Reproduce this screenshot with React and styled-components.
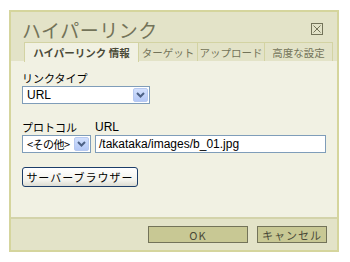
import React from "react";
import styled, { createGlobalStyle } from "styled-components";

const GlobalStyle = createGlobalStyle`
  html, body {
    margin: 0;
    padding: 0;
    background: #ffffff;
  }
  body {
    font-family: "Noto Sans CJK JP", "DejaVu Sans", sans-serif;
    font-size: 12px;
  }
`;

const Dialog = styled.div`
  box-sizing: border-box;
  margin: 10px 0 0 9px;
  width: 330px;
  height: 242px;
  border: 2px solid #d5d59d;
  background: #e3e3c8;
  display: flex;
  flex-direction: column;
`;

const TitleBar = styled.div`
  display: flex;
  align-items: center;
  justify-content: space-between;
  height: 30px;
  padding: 0 14px 0 11px;
`;

const Title = styled.div`
  font-size: 19px;
  color: #737359;
  letter-spacing: 0.5px;
  line-height: 1;
  padding-top: 4px;
`;

const CloseBox = styled.div`
  width: 12px;
  height: 12px;
  display: flex;
  margin-top: 4px;
`;

const Tabs = styled.div`
  display: flex;
  padding-left: 13px;
  height: 19px;
`;

const Tab = styled.div`
  box-sizing: border-box;
  width: ${(p) => p.$w}px;
  height: ${(p) => (p.$active ? "20px" : "19px")};
  border: 1px solid #d3d3a3;
  border-bottom: none;
  margin-right: -1px;
  background: ${(p) => (p.$active ? "#f1f1e3" : "#e3e3c8")};
  color: ${(p) => (p.$active ? "#4a4a38" : "#737359")};
  font-size: 10.5px;
  font-weight: ${(p) => (p.$active ? "bold" : "normal")};
  display: flex;
  align-items: center;
  justify-content: center;
  position: relative;
  z-index: ${(p) => (p.$active ? 1 : 0)};
  white-space: nowrap;
`;

const Panel = styled.div`
  box-sizing: border-box;
  height: 156px;
  background: #f1f1e3;
  padding: 11px 11px 0 11px;
  display: flex;
  flex-direction: column;
`;

const Label = styled.div`
  font-size: 11px;
  color: #000;
  line-height: 13px;
  height: 14px;
  white-space: nowrap;
  font-family: ${(p) => (p.$latin ? '"Liberation Sans", sans-serif' : "inherit")};
  font-size: ${(p) => (p.$latin ? "12px" : "11px")};
`;

const Field = styled.div`
  display: flex;
  flex-direction: column;
  flex: ${(p) => (p.$grow ? 1 : "none")};
  margin-bottom: ${(p) => p.$mb || 0}px;
`;

const Row = styled.div`
  display: flex;
  gap: 4px;
`;

const SelectBox = styled.div`
  box-sizing: border-box;
  width: ${(p) => p.$w}px;
  height: 18px;
  border: 1px solid #7f9db9;
  background: #fff;
  display: flex;
  align-items: center;
  justify-content: space-between;
  padding: 1px;
  font-size: 12px;
  color: #000;
`;

const SelectText = styled.span`
  padding-left: 3px;
  line-height: 1;
  white-space: nowrap;
  font-family: ${(p) => (p.$latin ? '"Liberation Sans", sans-serif' : "inherit")};
  font-size: ${(p) => (p.$latin ? "12px" : "11px")};
  letter-spacing: ${(p) => (p.$latin ? "0" : "-0.5px")};
`;

const ArrowBtn = styled.div`
  flex: none;
  width: 15px;
  height: 14px;
  border-radius: 2px;
  background: linear-gradient(#d2e0fd, #b4c8f6);
  border: 1px solid #b7c9f0;
  box-sizing: border-box;
  display: flex;
  align-items: center;
  justify-content: center;
`;

const TextInput = styled.div`
  box-sizing: border-box;
  height: 18px;
  border: 1px solid #7f9db9;
  background: #fff;
  display: flex;
  align-items: center;
  padding-left: 3px;
  font-family: "Liberation Sans", sans-serif;
  font-size: 12px;
  color: #000;
`;

const BrowseButton = styled.div`
  box-sizing: border-box;
  width: 116px;
  height: 20px;
  border: 1px solid #1c3d69;
  border-radius: 3px;
  background: linear-gradient(#ffffff, #f2f2ec 70%, #dcdcd2);
  display: flex;
  align-items: center;
  justify-content: center;
  font-size: 11px;
  letter-spacing: 1px;
  color: #000;
`;

const Footer = styled.div`
  flex: 1;
  border-top: 2px solid #d3d3aa;
  display: flex;
  align-items: center;
  justify-content: flex-end;
  gap: 9px;
  padding-right: 10px;
`;

const FootButton = styled.div`
  box-sizing: border-box;
  width: ${(p) => p.$w}px;
  height: 17px;
  border: 1px solid #737359;
  background: #c8c894;
  display: flex;
  align-items: center;
  justify-content: center;
  font-size: 11px;
  color: #4a4a38;
  letter-spacing: 1px;
`;

const Chevron = () => (
  <svg width="9" height="6" viewBox="0 0 9 6">
    <path d="M1 1 L4.5 4.5 L8 1" fill="none" stroke="#4d6185" strokeWidth="2" />
  </svg>
);

const Select = ({ w, latin, children }) => (
  <SelectBox $w={w}>
    <SelectText $latin={latin}>{children}</SelectText>
    <ArrowBtn>
      <Chevron />
    </ArrowBtn>
  </SelectBox>
);

export default function App() {
  return (
    <>
      <GlobalStyle />
      <Dialog>
        <TitleBar>
          <Title>ハイパーリンク</Title>
          <CloseBox>
            <svg width="12" height="12" viewBox="0 0 12 12">
              <rect x="0.5" y="0.5" width="11" height="11" fill="none" stroke="#737359" />
              <path d="M2.5 2.5 L9.5 9.5 M9.5 2.5 L2.5 9.5" stroke="#737359" strokeWidth="1" />
            </svg>
          </CloseBox>
        </TitleBar>
        <Tabs>
          <Tab $active $w={115}>ハイパーリンク 情報</Tab>
          <Tab $w={60}>ターゲット</Tab>
          <Tab $w={68}>アップロード</Tab>
          <Tab $w={69}>高度な設定</Tab>
        </Tabs>
        <Panel>
          <Field $mb={17}>
            <Label>リンクタイプ</Label>
            <Select w={128} latin>URL</Select>
          </Field>
          <Row>
            <Field $mb={14}>
              <Label>プロトコル</Label>
              <Select w={69}>&lt;その他&gt;</Select>
            </Field>
            <Field $mb={14} $grow>
              <Label $latin>URL</Label>
              <TextInput>/takataka/images/b_01.jpg</TextInput>
            </Field>
          </Row>
          <BrowseButton>サーバーブラウザー</BrowseButton>
        </Panel>
        <Footer>
          <FootButton $w={100}>OK</FootButton>
          <FootButton $w={70}>キャンセル</FootButton>
        </Footer>
      </Dialog>
    </>
  );
}
